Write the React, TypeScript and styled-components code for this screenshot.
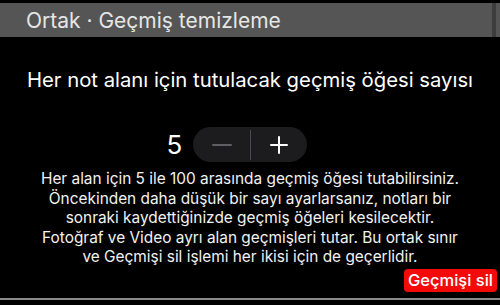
import styled, { createGlobalStyle } from "styled-components";

const GlobalStyle = createGlobalStyle`
    html, body {
        margin: 0;
        padding: 0;
        background: #000;
    }
    body {
        width: 500px;
        height: 305px;
        overflow: hidden;
        font-family: Inter, "Liberation Sans", Arial, sans-serif;
        color: #fff;
    }
`;

const Screen = styled.div`
    width: 500px;
    height: 305px;
    display: flex;
    flex-direction: column;
    padding-top: 3px;
    box-sizing: border-box;
`;

const Header = styled.header`
    height: 34px;
    display: flex;
    align-items: center;
    background: #555555;
    padding-left: 26px;
    font-size: 21px;
    color: #e6e6e6;
    position: relative;
`;

const HeaderEdge = styled.span`
    position: absolute;
    top: 0;
    bottom: 0;
    right: 4px;
    width: 4px;
    background: #3d3d3d;
`;

const Body = styled.main`
    flex: 1;
    display: flex;
    flex-direction: column;
    align-items: center;
    padding-top: 30px;
`;

const Title = styled.h1`
    margin: 0;
    font-size: 20.3px;
    font-weight: 400;
    line-height: 26px;
    text-align: center;
`;

const StepperRow = styled.div`
    display: flex;
    align-items: center;
    gap: 11px;
    margin-top: 34px;
    margin-left: -26px;
`;

const Value = styled.span`
    font-size: 26px;
    line-height: 30px;
`;

const Stepper = styled.div`
    width: 114px;
    height: 35px;
    border-radius: 18px;
    background: #1c1c1e;
    display: flex;
    align-items: center;
`;

const StepButton = styled.button<{ $dim?: boolean }>`
    flex: 1;
    height: 100%;
    border: none;
    background: transparent;
    color: ${(p) => (p.$dim ? "#5f5f63" : "#ffffff")};
    display: flex;
    align-items: center;
    justify-content: center;
    padding: 0;
`;

const Divider = styled.span`
    width: 1px;
    height: 30px;
    background: #4a4a4e;
`;

const Help = styled.p`
    margin: 7px 0 0;
    font-size: 15.4px;
    line-height: 19.5px;
    text-align: center;
    color: #f2f2f2;
`;

const Actions = styled.div`
    align-self: stretch;
    display: flex;
    justify-content: flex-end;
    padding-right: 3px;
    margin-top: 2px;
`;

const DangerButton = styled.button`
    background: #f50a0a;
    color: #fff;
    border: none;
    border-radius: 4px;
    height: 23px;
    padding: 0 4px;
    font-family: Inter, "Liberation Sans", Arial, sans-serif;
    font-size: 16.5px;
    font-weight: 500;
    line-height: 23px;
`;

const BottomRule = styled.div`
    height: 2px;
    background: #8a8a8a;
    margin-bottom: 5px;
`;

const Minus = () => (
    <svg width="20" height="20" viewBox="0 0 20 20">
        <path d="M1 10h18" stroke="currentColor" strokeWidth="2" strokeLinecap="round" />
    </svg>
);

const Plus = () => (
    <svg width="20" height="20" viewBox="0 0 20 20">
        <path d="M2 10h16M10 2v16" stroke="currentColor" strokeWidth="2" strokeLinecap="round" />
    </svg>
);

const App = () => {
    return (
        <>
            <GlobalStyle />
            <Screen>
                <Header>
                    Ortak · Geçmiş temizleme
                    <HeaderEdge />
                </Header>
                <Body>
                    <Title>Her not alanı için tutulacak geçmiş öğesi sayısı</Title>
                    <StepperRow>
                        <Value>5</Value>
                        <Stepper>
                            <StepButton $dim aria-label="Azalt">
                                <Minus />
                            </StepButton>
                            <Divider />
                            <StepButton aria-label="Artır">
                                <Plus />
                            </StepButton>
                        </Stepper>
                    </StepperRow>
                    <Help>
                        Her alan için 5 ile 100 arasında geçmiş öğesi tutabilirsiniz.
                        <br />
                        Öncekinden daha düşük bir sayı ayarlarsanız, notları bir
                        <br />
                        sonraki kaydettiğinizde geçmiş öğeleri kesilecektir.
                        <br />
                        Fotoğraf ve Video ayrı alan geçmişleri tutar. Bu ortak sınır
                        <br />
                        ve Geçmişi sil işlemi her ikisi için de geçerlidir.
                    </Help>
                    <Actions>
                        <DangerButton>Geçmişi sil</DangerButton>
                    </Actions>
                </Body>
                <BottomRule />
            </Screen>
        </>
    );
};

export default App;
